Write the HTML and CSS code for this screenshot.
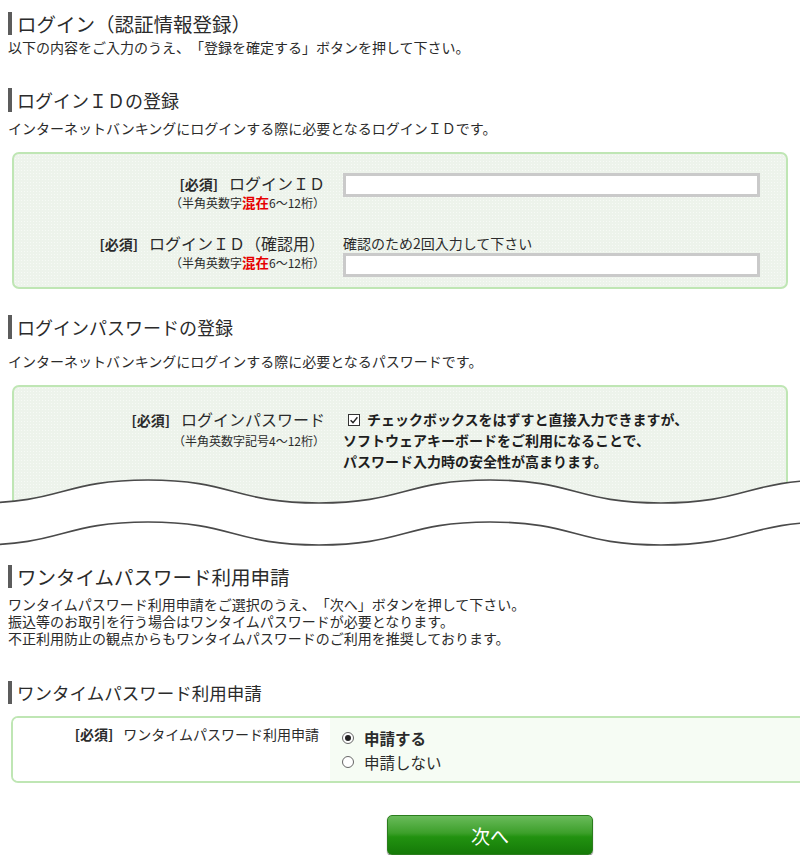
FILE: index.html
```html
<!DOCTYPE html>
<html lang="ja">
<head>
    <meta charset="UTF-8">
    <meta name="viewport" content="width=device-width, initial-scale=1.0">
    <title>ログイン（認証情報登録）</title>
    <link rel="stylesheet" href="styles.css">
</head>
<body>

<div class="page">
    <h1 class="title">ログイン（認証情報登録）</h1>
    <p class="lead">以下の内容をご入力のうえ、「登録を確定する」ボタンを押して下さい。</p>

    <!-- ログインID -->
    <h2 class="sub-title first">ログインＩＤの登録</h2>
    <p class="lead gap">インターネットバンキングにログインする際に必要となるログインＩＤです。</p>
    <div class="form-box id-box">
        <div class="row">
            <div class="label">
                <div class="label-main"><span class="must">[必須]</span><span class="name">ログインＩＤ</span></div>
                <div class="hint">（半角英数字<em>混在</em>6～12桁）</div>
            </div>
            <div class="field">
                <input type="text" class="text-input">
            </div>
        </div>
        <div class="row">
            <div class="label">
                <div class="label-main"><span class="must">[必須]</span><span class="name">ログインＩＤ（確認用）</span></div>
                <div class="hint">（半角英数字<em>混在</em>6～12桁）</div>
            </div>
            <div class="field">
                <div class="note">確認のため2回入力して下さい</div>
                <input type="text" class="text-input">
            </div>
        </div>
    </div>

    <!-- ログインパスワード -->
    <h2 class="sub-title">ログインパスワードの登録</h2>
    <p class="lead gap">インターネットバンキングにログインする際に必要となるパスワードです。</p>
    <div class="torn">
        <div class="form-box pw-box">
            <div class="row">
                <div class="label">
                    <div class="label-main"><span class="must">[必須]</span><span class="name">ログインパスワード</span></div>
                    <div class="hint">（半角英数字記号4～12桁）</div>
                </div>
                <div class="field pw-note">
                    <svg class="check" width="12" height="12" viewBox="0 0 12 12"><rect x="0.5" y="0.5" width="11" height="11" fill="#fff" stroke="#333"/><path d="M2.6 6.2 L5 8.6 L9.4 3.2" fill="none" stroke="#222" stroke-width="1.4"/></svg>チェックボックスをはずすと直接入力できますが、<br>
                    ソフトウェアキーボードをご利用になることで、<br>
                    パスワード入力時の安全性が高まります。
                </div>
            </div>
        </div>
        <!-- 省略部分の波線 -->
        <svg class="tear" width="800" height="100" viewBox="0 460 800 100">
            <path d="M-23 501 C62.5 501 62.5 478 148 478 S233.5 501 319 501 S404.5 478 490 478 S575.5 501 661 501 S746.5 478 832 478 L832 560 L-23 560 Z" fill="#fff"/>
            <path d="M-23 501 C62.5 501 62.5 478 148 478 S233.5 501 319 501 S404.5 478 490 478 S575.5 501 661 501 S746.5 478 832 478" fill="none" stroke="#4a4a4a" stroke-width="1.6"/>
            <path d="M-23 543 C62.5 543 62.5 520 148 520 S233.5 543 319 543 S404.5 520 490 520 S575.5 543 661 543 S746.5 520 832 520" fill="none" stroke="#4a4a4a" stroke-width="1.6"/>
        </svg>
    </div>

    <!-- ワンタイムパスワード -->
    <h1 class="title">ワンタイムパスワード利用申請</h1>
    <p class="lead lines">ワンタイムパスワード利用申請をご選択のうえ、「次へ」ボタンを押して下さい。<br>
        振込等のお取引を行う場合はワンタイムパスワードが必要となります。<br>
        不正利用防止の観点からもワンタイムパスワードのご利用を推奨しております。</p>

    <h2 class="sub-title small">ワンタイムパスワード利用申請</h2>
    <div class="otp-box">
        <div class="otp-label"><span class="must">[必須]</span><span class="otp-name">ワンタイムパスワード利用申請</span></div>
        <div class="otp-choices">
            <label class="choice selected"><span class="radio on"></span>申請する</label>
            <label class="choice"><span class="radio"></span>申請しない</label>
        </div>
    </div>

    <button class="next-btn" type="button">次へ</button>
</div>

</body>
</html>
```

FILE: styles.css
```css
html {
    overflow: hidden;
}

body {
    margin: 0;
    color: #2b2b2b;
    font-family: "Noto Sans CJK JP", sans-serif;
    font-size: 14px;
    text-spacing-trim: space-all;
    background-color: #fff;
}

.page {
    padding: 12px 8px 0;
}

.title {
    margin: 0;
    padding-left: 5px;
    border-left: 4px solid #5c5c5c;
    font-size: 19.5px;
    font-weight: normal;
    line-height: 23px;
}

.lead {
    margin: 3px 0 0;
    font-size: 14px;
    line-height: 18px;
}

.lead.gap {
    margin-top: 7px;
}

.sub-title {
    margin: 26px 0 0;
    padding-left: 5px;
    border-left: 4px solid #5c5c5c;
    font-size: 18px;
    font-weight: normal;
    line-height: 24px;
}

.sub-title.first {
    margin-top: 32px;
}

.sub-title + .lead.gap {
    margin-top: 13px;
}

.sub-title.first + .lead.gap {
    margin-top: 7px;
}

.sub-title.small {
    margin-top: 34px;
    font-size: 17.5px;
    line-height: 23px;
}

.form-box {
    margin: 15px 4px 0;
    border: 2px solid #bfe6b4;
    border-radius: 7px;
    background-color: #edf3eb;
    background-image: radial-gradient(rgba(255, 255, 255, 0.55) 0.6px, transparent 0.9px);
    background-size: 3px 3px;
}

.id-box {
    padding: 19px 0 10px;
}

.row {
    display: grid;
    grid-template-columns: 313px 417px;
    column-gap: 16px;
}

.row + .row {
    margin-top: 22px;
}

.label {
    padding-right: 2px;
    text-align: right;
}

.label-main {
    line-height: 20px;
}

.must {
    font-size: 14px;
    font-weight: bold;
}

.name {
    margin-left: 11px;
    font-size: 16px;
}

.hint {
    font-size: 12px;
    line-height: 16px;
}

.hint em {
    color: #e60000;
    font-size: 13.5px;
    font-style: normal;
    font-weight: bold;
}

.note {
    font-size: 14px;
    line-height: 20px;
}

.text-input {
    display: block;
    box-sizing: border-box;
    width: 417px;
    height: 24px;
    margin: 0;
    border: 3px solid #cacaca;
    background-color: #fff;
}

/* パスワード欄（下が省略されている） */
.torn {
    position: relative;
    height: 180px;
    margin-top: 15px;
}

.pw-box {
    box-sizing: border-box;
    height: 125px;
    margin-top: 0;
    padding-top: 22px;
}

.pw-box .label-main {
    line-height: 21px;
}

.pw-box .hint {
    line-height: 20px;
}

.pw-note {
    font-size: 14px;
    font-weight: bold;
    line-height: 21px;
    color: #1e1e1e;
}

.check {
    margin: 0 7px 0 5px;
    vertical-align: -1px;
}

.tear {
    position: absolute;
    top: 77px;
    left: -8px;
}

.lead.lines {
    margin-top: 8px;
    line-height: 17px;
}

/* ワンタイムパスワード */
.otp-box {
    display: grid;
    grid-template-columns: 317px 1fr;
    margin: 12px -30px 0 3px;
    border: 2px solid #bfe6b4;
    border-radius: 7px;
    overflow: hidden;
}

.otp-label {
    padding: 6px 11px 0 0;
    text-align: right;
    line-height: 20px;
    background-color: #fff;
}

.otp-name {
    margin-left: 10px;
    font-size: 14px;
}

.otp-choices {
    display: flex;
    flex-direction: column;
    padding: 8px 0 7px 12px;
    background-color: #f6fcf4;
}

.choice {
    display: flex;
    align-items: center;
    font-size: 15.5px;
    line-height: 24px;
}

.choice.selected {
    font-weight: bold;
}

.radio {
    display: grid;
    place-items: center;
    box-sizing: border-box;
    width: 12px;
    height: 12px;
    margin-right: 10px;
    border: 1px solid #666;
    border-radius: 50%;
    background-color: #fff;
}

.radio.on::after {
    content: "";
    width: 6px;
    height: 6px;
    border-radius: 50%;
    background-color: #222;
}

.next-btn {
    display: block;
    width: 206px;
    height: 40px;
    margin: 32px 0 0 379px;
    border: 1px solid #2b7d1d;
    border-radius: 5px;
    color: #fff;
    font-family: "Noto Sans CJK JP", sans-serif;
    font-size: 19px;
    background: linear-gradient(#6abb5b, #3c9f2a 45%, #229210 55%, #157a08);
    box-shadow: 0 1px 1px rgba(0, 0, 0, 0.6);
    cursor: pointer;
}
```
